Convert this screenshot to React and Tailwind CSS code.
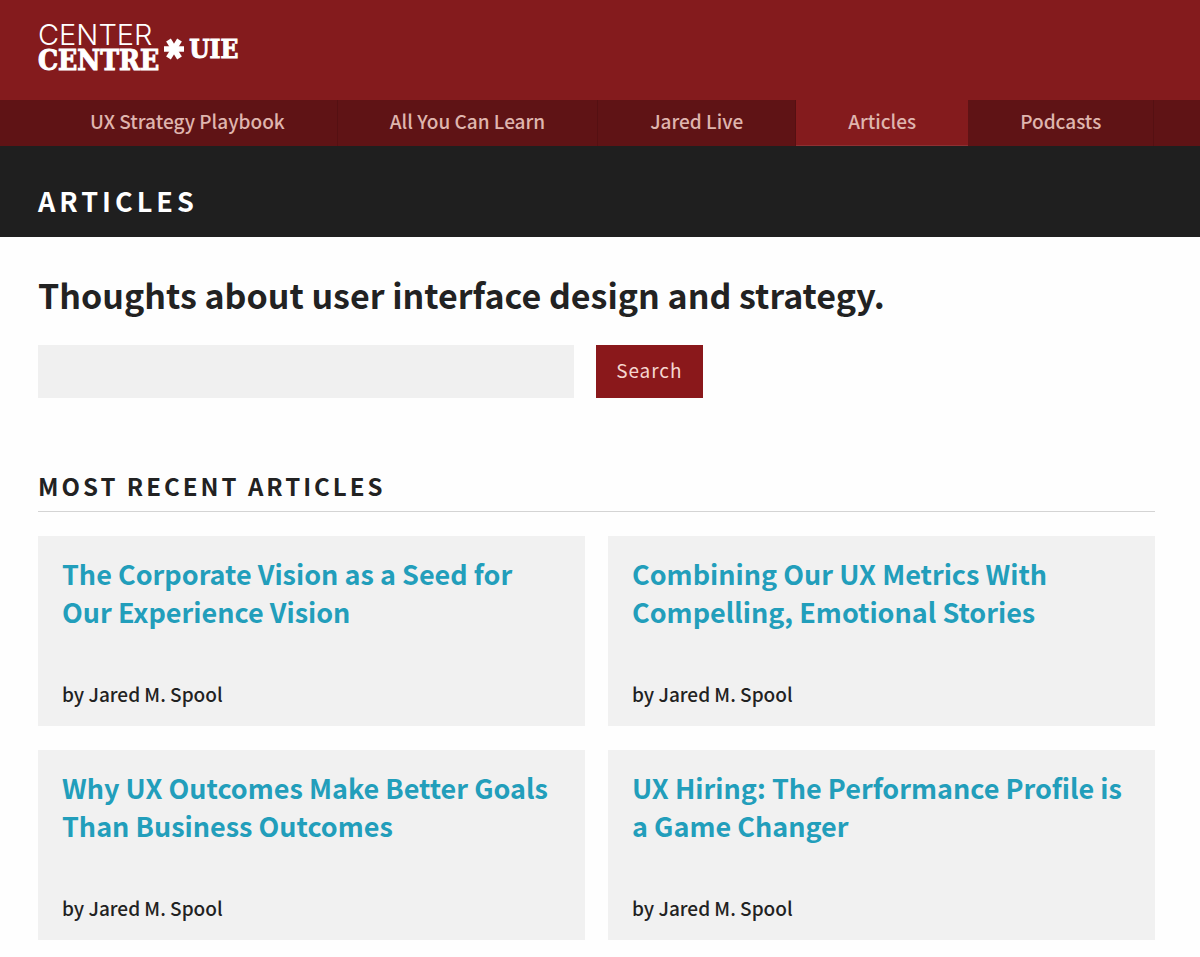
const navItems = [
  { label: "UX Strategy Playbook" },
  { label: "All You Can Learn" },
  { label: "Jared Live" },
  { label: "Articles", active: true },
  { label: "Podcasts" },
];

const articles = [
  { title: "The Corporate Vision as a Seed for Our Experience Vision", author: "Jared M. Spool" },
  { title: "Combining Our UX Metrics With Compelling, Emotional Stories", author: "Jared M. Spool" },
  { title: "Why UX Outcomes Make Better Goals Than Business Outcomes", author: "Jared M. Spool" },
  { title: "UX Hiring: The Performance Profile is a Game Changer", author: "Jared M. Spool" },
];

function Asterisk() {
  return (
    <svg viewBox="0 0 22 22" className="size-[22px]" aria-hidden="true">
      <g stroke="white" strokeWidth="5.5">
        <path d="M1 11H21" />
        <path d="M5.500 2 16.500 20" />
        <path d="M16.500 2 5.500 20" />
      </g>
    </svg>
  );
}

function Logo() {
  return (
    <a href="#" className="flex items-center gap-1 text-white">
      <span className="flex flex-col">
        <span className="font-['Inter',sans-serif] text-[29px] leading-[24px] font-light">CENTER</span>
        <span className="font-['DejaVu_Serif_Condensed','DejaVu_Serif',serif] text-[28px] leading-[28px] font-bold [-webkit-text-stroke:1px_white]">
          CENTRE
        </span>
      </span>
      <Asterisk />
      <span className="font-['DejaVu_Serif_Condensed','DejaVu_Serif',serif] text-[26px] leading-[24px] font-bold [-webkit-text-stroke:1px_white]">
        UIE
      </span>
    </a>
  );
}

function Header() {
  return (
    <header className="bg-[#841b1d]">
      <div className="flex h-[100px] items-center px-[38px] pb-0.5">
        <Logo />
      </div>
      <nav className="flex h-[46px] bg-[#5f1315] px-[38px]">
        {navItems.map((item) => (
          <a
            key={item.label}
            href="#"
            className={
              item.active
                ? "border-b border-[#8f3032] bg-[#841b1d] px-[52px] text-[19px] leading-[42px] font-medium text-[#dfb5ae]"
                : "border-r border-[#551012] px-[52px] text-[19px] leading-[42px] font-medium text-[#dfb5ae]"
            }
          >
            {item.label}
          </a>
        ))}
      </nav>
    </header>
  );
}

function SearchForm() {
  return (
    <form className="mt-6 flex gap-[22px]" onSubmit={(e) => e.preventDefault()}>
      <input
        type="search"
        aria-label="Search articles"
        className="h-[53px] w-[48%] bg-[#f0f0f0] px-4 text-[19px] outline-none"
      />
      <button type="submit" className="h-[53px] bg-[#8a181b] px-5 pb-0.5 text-[19px] tracking-wider text-[#f5d6d0]">
        Search
      </button>
    </form>
  );
}

function ArticleCard({ title, author }) {
  return (
    <article className="flex h-[190px] flex-col justify-between bg-[#f1f1f1] px-6 pt-[19px] pb-[17px]">
      <h3 className="text-[27px] leading-[38px] font-bold text-[#229ebb]">
        <a href="#">{title}</a>
      </h3>
      <p className="text-[19px] leading-[30px] font-medium">by {author}</p>
    </article>
  );
}

export default function App() {
  return (
    <div className="min-h-screen bg-[#fefefe] font-['Noto_Sans_CJK_SC',sans-serif] text-[#222]">
      <Header />
      <div className="bg-[#1f1f1f] px-[38px] pt-[35px] pb-4">
        <h1 className="text-[27px] leading-[40px] font-bold tracking-[4px] text-white">ARTICLES</h1>
      </div>
      <main className="pr-[45px] pb-4 pl-[38px]">
        <h2 className="pt-8 text-[34px] leading-[52px] font-bold">
          Thoughts about user interface design and strategy.
        </h2>
        <SearchForm />
        <section className="mt-[69px]">
          <h2 className="border-b border-[#d4d4d4] pb-1.5 text-[24px] leading-[38px] font-bold tracking-[3px]">
            MOST RECENT ARTICLES
          </h2>
          <div className="mt-6 grid grid-cols-2 gap-x-[23px] gap-y-6">
            {articles.map((article) => (
              <ArticleCard key={article.title} {...article} />
            ))}
          </div>
        </section>
      </main>
    </div>
  );
}
